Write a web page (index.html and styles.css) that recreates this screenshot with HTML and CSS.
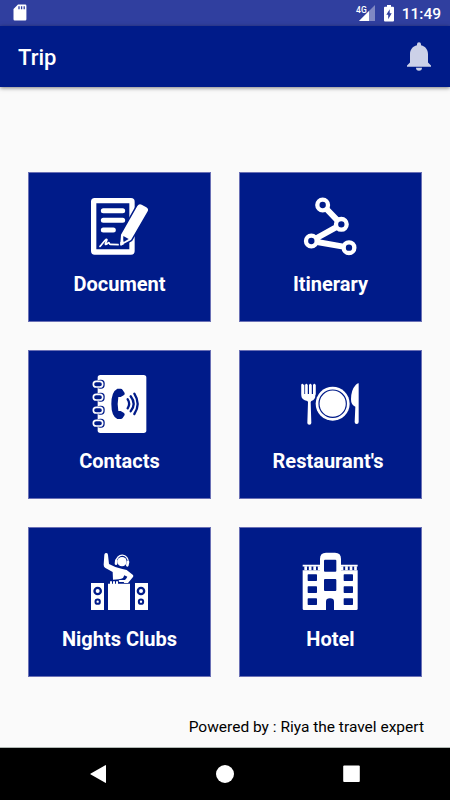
FILE: index.html
```html
<!DOCTYPE html>
<html lang="en">
<head>
    <meta charset="UTF-8">
    <meta name="viewport" content="width=device-width, initial-scale=1.0">
    <title>Trip</title>
    <link rel="stylesheet" href="styles.css">
</head>
<body>

<!-- Status Bar -->
<div class="status-bar">
    <svg class="sd-icon" width="14" height="17" viewBox="0 0 14 17">
        <path fill="#fff" d="M5 .5h7.2a1.2 1.2 0 0 1 1.2 1.2v13.6a1.2 1.2 0 0 1-1.2 1.2H1.7a1.2 1.2 0 0 1-1.2-1.2V5z"/>
        <path stroke="#303f9f" stroke-width="1.3" d="M6 2.3v3M8.6 2.3v3M11.2 2.3v3"/>
    </svg>
    <div class="status-right">
        <span class="network">4G</span>
        <svg class="signal-icon" width="16" height="16" viewBox="0 0 16 16">
            <path fill="#8088c3" d="M16 0v16H0z"/>
            <path fill="#fff" d="M10 6v10H0z"/>
        </svg>
        <svg class="battery-icon" width="10" height="17" viewBox="0 0 10 17">
            <path fill="#fff" d="M3 0h4v1.7h2a1 1 0 0 1 1 1V15.500a1 1 0 0 1-1 1H1a1 1 0 0 1-1-1V2.700a1 1 0 0 1 1-1h2z"/>
            <path fill="#303f9f" d="M5.700 4.200v4h2l-3.500 6v-4.500H2.300z"/>
        </svg>
        <span class="clock">11:49</span>
    </div>
</div>

<!-- App Bar -->
<header class="app-bar">
    <h1>Trip</h1>
    <svg class="bell-icon" width="24" height="29" viewBox="0 0 24 29">
        <path fill="#ccd1e8" d="M12 .3a2 2 0 0 1 2 2v1c4.500 1 7 4.500 7 9V20.500l3 2.900v1.300H0v-1.300l3-2.900v-8.200c0-4.500 2.500-8 7-9v-1a2 2 0 0 1 2-2zM9 25.700h6a3 3 0 0 1-6 0z"/>
    </svg>
</header>

<!-- Menu Tiles -->
<main class="menu">
    <a class="tile">
        <svg class="tile-icon" viewBox="0 0 240 210">
            <rect x="41" y="32" width="115" height="154" fill="none" stroke="#fff" stroke-width="16" rx="3"/>
            <path stroke="#fff" stroke-width="15" stroke-linecap="round" d="M70 62h58M70 91h58M70 120h30"/>
            <path fill="none" stroke="#fff" stroke-width="5" stroke-linecap="round" stroke-linejoin="round" d="M60 169c7-6 12-17 19-21 6-1-6 14-2 15 5 0 7-6 10-5 2 1 0 5 4 5l24 1"/>
            <path fill="#fff" stroke="#001b89" stroke-width="9" stroke-linejoin="round" paint-order="stroke" d="M123 134l49-86q5-8 13-4l14 8q8 5 4 12l-50 86-30 16q-3 0-2-4z"/>
            <path fill="#001b89" d="M130 138l16 9-15 9q-2-6-1-18z"/>
            <path fill="#fff" d="M121 155l12 7-10 5q-3 0-2-4z"/>
        </svg>
        <span class="tile-label">Document</span>
    </a>

    <a class="tile">
        <svg class="tile-icon shift" viewBox="0 0 240 210">
            <path fill="none" stroke="#fff" stroke-width="18" stroke-linejoin="round" d="M98 45l56 58-90 50 113 20"/>
            <circle class="stop" cx="98" cy="45" r="16"/>
            <circle class="stop" cx="154" cy="103" r="16"/>
            <circle class="stop" cx="64" cy="153" r="16"/>
            <circle class="stop" cx="177" cy="173" r="16"/>
        </svg>
        <span class="tile-label">Itinerary</span>
    </a>

    <a class="tile">
        <svg class="tile-icon" viewBox="0 0 240 210">
            <rect x="53" y="21" width="146" height="174" rx="8" fill="#fff"/>
            <!-- Binder rings -->
            <g fill="#001b89">
                <rect x="50" y="35" width="24" height="27" rx="11"/>
                <rect x="50" y="74" width="24" height="27" rx="11"/>
                <rect x="50" y="113" width="24" height="27" rx="11"/>
                <rect x="50" y="152" width="24" height="27" rx="11"/>
            </g>
            <g fill="none" stroke="#fff" stroke-width="5">
                <rect x="40" y="40" width="28" height="17" rx="8.500"/>
                <rect x="40" y="79" width="28" height="17" rx="8.500"/>
                <rect x="40" y="118" width="28" height="17" rx="8.500"/>
                <rect x="40" y="157" width="28" height="17" rx="8.500"/>
            </g>
            <path fill="#001b89" d="M112 62h10q4 0 6 4l6 9q1 5-3 7l-9 5h-7q-4 21 0 42h7l9 5q4 2 3 7l-6 9q-2 3-6 3h-10q-18-8-18-45t18-46z"/>
            <path fill="none" stroke="#001b89" stroke-width="7" stroke-linecap="round" d="M143 94q9 13 0 27M152 85q18 23 0 45M163 77q20 31 0 61"/>
        </svg>
        <span class="tile-label">Contacts</span>
    </a>

    <a class="tile">
        <svg class="tile-icon shift" viewBox="0 0 240 210">
            <path fill="#fff" d="M34 50q0-3 3-3t3 3v28h6V50q0-3 3-3t3 3v28h6V50q0-3 3-3t3 3v28h6V50q0-3 3-3t3 3v33q0 11-12 16l-2 3 2 63q0 5-6 5t-6-5l2-63-2-3q-18-5-18-16z"/>
            <path fill="#fff" d="M35 50h8v30h-8zM46 50h7v30h-7zM57 50h8v30h-8zM69 50h8v30h-8z"/>
            <circle cx="128" cy="107" r="51" fill="#fff"/>
            <circle cx="128" cy="107" r="41" fill="none" stroke="#001b89" stroke-width="3.500"/>
            <path fill="#fff" d="M206 46v116q0 6-6 6t-6-6l2-46q-13-4-13-22 0-28 14-43 5-6 9-5z"/>
        </svg>
        <span class="tile-label restaurants">Restaurant's</span>
    </a>

    <a class="tile">
        <svg class="tile-icon" viewBox="0 0 240 210">
            <!-- Speakers and desk -->
            <path fill="#fff" d="M33 114h39v81H33zM165 114h39v81h-39zM84 116h66v79H84z"/>
            <path stroke="#fff" stroke-width="6" d="M93 109v8M102 109v8M111 109v8"/>
            <circle class="speaker" cx="53" cy="138" r="9.500"/>
            <circle class="speaker" cx="183" cy="138" r="9.500"/>
            <circle class="speaker small" cx="53" cy="170" r="6.500"/>
            <circle class="speaker small" cx="183" cy="170" r="6.500"/>
            <!-- DJ -->
            <path fill="#fff" d="M73 29q1-6 6-5 5 0 5 6l3 27 19 9q20 6 34 9l19 15q2 3 0 6l-15 18h-13l11-19-9-4-4 8q-10 5-30 5l-1-23-23-13q-4-3-4-9z"/>
            <circle cx="126" cy="50" r="14" fill="#fff"/>
            <path fill="none" stroke="#fff" stroke-width="4" d="M108 50a18 20 0 0 1 37 2"/>
            <path stroke="#fff" stroke-width="8" stroke-linecap="round" d="M109 47l-1 9M144 51l-2 10"/>
            <path fill="none" stroke="#fff" stroke-width="6" stroke-linecap="round" d="M119 108h16l8-5"/>
        </svg>
        <span class="tile-label">Nights Clubs</span>
    </a>

    <a class="tile">
        <svg class="tile-icon shift" viewBox="0 0 240 210">
            <path fill="#fff" d="M38 76h52V42q0-19 18-19h27q18 0 18 19v34h50v115q0 4-4 4h-67v-25q0-10-12-10t-12 10v25H42q-4 0-4-4z"/>
            <path stroke="#fff" stroke-width="5" d="M38 62h52M152 62h51"/>
            <path stroke="#fff" stroke-width="12" stroke-dasharray="8 5.500" d="M43 70h47M152 70h50"/>
            <g fill="#001b89">
                <rect x="102" y="44" width="37" height="36" rx="3"/>
                <rect x="102" y="102" width="37" height="36" rx="3"/>
                <rect x="53" y="88" width="28" height="20" rx="2"/>
                <rect x="53" y="124" width="28" height="20" rx="2"/>
                <rect x="53" y="160" width="28" height="20" rx="2"/>
                <rect x="161" y="88" width="28" height="20" rx="2"/>
                <rect x="161" y="124" width="28" height="20" rx="2"/>
                <rect x="161" y="160" width="28" height="20" rx="2"/>
            </g>
        </svg>
        <span class="tile-label">Hotel</span>
    </a>
</main>

<p class="powered">Powered by : Riya the travel expert</p>

<!-- Navigation Bar -->
<nav class="nav-bar">
    <svg width="18" height="18" viewBox="0 0 18 18"><path fill="#fff" d="M15.300.2a.5.5 0 0 1 .7.5v16.600a.5.5 0 0 1-.7.5L.8 9.600a.7.7 0 0 1 0-1.200z"/></svg>
    <svg width="18" height="18" viewBox="0 0 18 18"><circle cx="9" cy="9" r="9" fill="#fff"/></svg>
    <svg width="18" height="18" viewBox="0 0 18 18"><rect x="1.200" y=".5" width="16.600" height="16.600" rx="1" fill="#fff"/></svg>
</nav>

</body>
</html>
```

FILE: styles.css
```css
/* Global Styling */
* {
    margin: 0;
    padding: 0;
    box-sizing: border-box;
    font-family: Roboto, sans-serif;
}

body {
    display: flex;
    flex-direction: column;
    height: 100vh;
    overflow: hidden;
    background-color: #fafafa;
    color: #000;
}

/* Status Bar */
.status-bar {
    display: flex;
    justify-content: space-between;
    align-items: flex-start;
    height: 26px;
    padding: 5px 9px 0 13px;
    background-color: #303f9f;
    color: #fff;
}

.sd-icon {
    margin-top: -1px;
}

.status-right {
    display: flex;
    align-items: flex-start;
}

.network {
    margin-right: -8px;
    font-size: 8.5px;
    font-weight: 500;
    line-height: 10px;
    z-index: 1;
}

.signal-icon {
    margin-right: 9px;
}

.battery-icon {
    margin-right: 8px;
}

.clock {
    font-size: 15.5px;
    font-weight: 500;
    line-height: 18px;
}

/* App Bar */
.app-bar {
    display: flex;
    justify-content: space-between;
    align-items: center;
    height: 61px;
    padding: 0 19px 0 18px;
    background-color: #001b89;
    color: #fff;
    box-shadow: 0 1px 4px rgba(0, 0, 0, 0.5);
}

.app-bar h1 {
    font-size: 22px;
    font-weight: 500;
    padding-top: 2px;
}

/* Menu Tiles */
.menu {
    display: grid;
    grid-template-columns: 183px 183px;
    grid-auto-rows: 149.500px;
    gap: 28px;
    padding: 85px 28px 0;
}

.tile {
    display: flex;
    flex-direction: column;
    align-items: center;
    padding-top: 17px;
    border: 1px solid #6a70b5;
    background-color: #001b89;
    color: #fff;
}

.tile-icon {
    width: 80px;
    height: 70px;
}

.tile-icon.shift {
    margin-right: 1.5px;
}

.tile-label {
    margin-top: 11.9px;
    font-size: 20px;
    font-weight: 700;
    line-height: 24px;
}

.tile-label.restaurants {
    margin-right: 5px;
}

.stop {
    fill: #001b89;
    stroke: #fff;
    stroke-width: 13;
}

.speaker {
    fill: none;
    stroke: #001b89;
    stroke-width: 7;
}

.speaker.small {
    stroke-width: 6;
}

/* Footer */
.powered {
    margin-top: auto;
    padding: 0 26px 10px 0;
    text-align: right;
    font-size: 15.5px;
    line-height: 20px;
}

/* Navigation Bar */
.nav-bar {
    display: flex;
    justify-content: space-between;
    align-items: center;
    height: 53px;
    padding: 0 90px;
    border-top: 1px solid #b0b8b4;
    background-color: #000;
}
```
